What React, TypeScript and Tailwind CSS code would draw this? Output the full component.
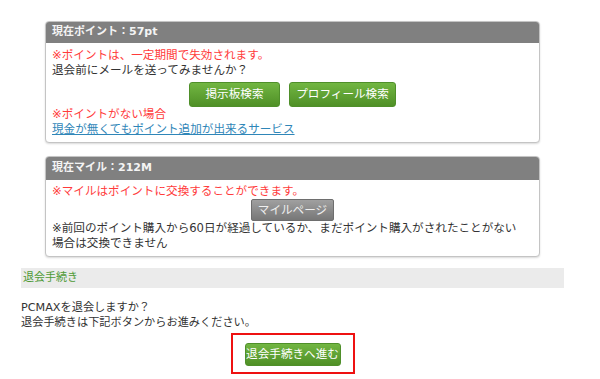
import React from "react";

const font = { fontFamily: '"DejaVu Sans", "Noto Sans CJK JP", sans-serif' };

type PanelProps = {
  title: string;
  headerClass: string;
  bodyClass: string;
  children: React.ReactNode;
};

const Panel = ({ title, headerClass, bodyClass, children }: PanelProps) => (
  <div className="mx-[24px] rounded-[4px] border border-[#c4c4c4] bg-white shadow-[0_1px_2px_rgba(0,0,0,0.15)] overflow-hidden">
    <div className={`flex items-center bg-[#808080] px-[6px] text-[11px] font-bold text-[#f4f4f4] ${headerClass}`}>
      {title}
    </div>
    <div className={`px-[6px] text-[11.6px] leading-[15px] text-[#333] ${bodyClass}`}>{children}</div>
  </div>
);

const GreenButton = ({ label, className }: { label: string; className: string }) => (
  <button
    className={`h-[25px] rounded-[3px] border border-[#4f8f2a] bg-gradient-to-b from-[#72b642] to-[#4f9026] text-[11.6px] text-white ${className}`}
  >
    {label}
  </button>
);

export default function App() {
  return (
    <div className="h-[379px] w-[600px] bg-white pt-[21px]" style={font}>
      <div className="ml-[21px] w-[543px]">
        <Panel title="現在ポイント：57pt" headerClass="h-[21px]" bodyClass="pt-[5px] pb-[5px]">
          <p className="text-[#ff3b3b]">※ポイントは、一定期間で失効されます。</p>
          <p>退会前にメールを送ってみませんか？</p>
          <div className="mt-[4px] flex justify-center gap-[9px]">
            <GreenButton label="掲示板検索" className="w-[91px]" />
            <GreenButton label="プロフィール検索" className="w-[107px]" />
          </div>
          <p className="text-[#ff3b3b]">※ポイントがない場合</p>
          <a href="#" className="text-[#2f86b8] underline">
            現金が無くてもポイント追加が出来るサービス
          </a>
        </Panel>

        <div className="h-[13px]" />

        <Panel title="現在マイル：212M" headerClass="h-[23px]" bodyClass="pt-[4px] pb-[5px]">
          <p className="text-[#ff3b3b]">※マイルはポイントに交換することができます。</p>
          <div className="flex justify-center">
            <button className="h-[22px] w-[83px] rounded-[2px] border border-[#6e6e6e] bg-gradient-to-b from-[#a0a0a0] to-[#777] text-[11.6px] text-[#f0f0f0]">
              マイルページ
            </button>
          </div>
          <p className="whitespace-nowrap">
            ※前回のポイント購入から60日が経過しているか、まだポイント購入がされたことがない
            <br />
            場合は交換できません
          </p>
        </Panel>

        <div className="mt-[11px] flex h-[20px] items-center bg-[#ebebeb] pl-[2px] text-[11px] text-[#4e9a36]">
          退会手続き
        </div>

        <div className="mt-[12px] text-[11.2px] leading-[15px] text-[#333]">
          <p>PCMAXを退会しますか？</p>
          <p>退会手続きは下記ボタンからお進みください。</p>
        </div>

        <div className="mt-[3px] flex justify-center">
          <div className="border-2 border-[#ee1111] px-[12px] py-[6px]">
            <button className="h-[23px] w-[96px] rounded-[3px] border border-[#4f8f2a] bg-gradient-to-b from-[#72b642] to-[#4f9026] text-[11.6px] text-white">
              退会手続きへ進む
            </button>
          </div>
        </div>
      </div>
    </div>
  );
}
